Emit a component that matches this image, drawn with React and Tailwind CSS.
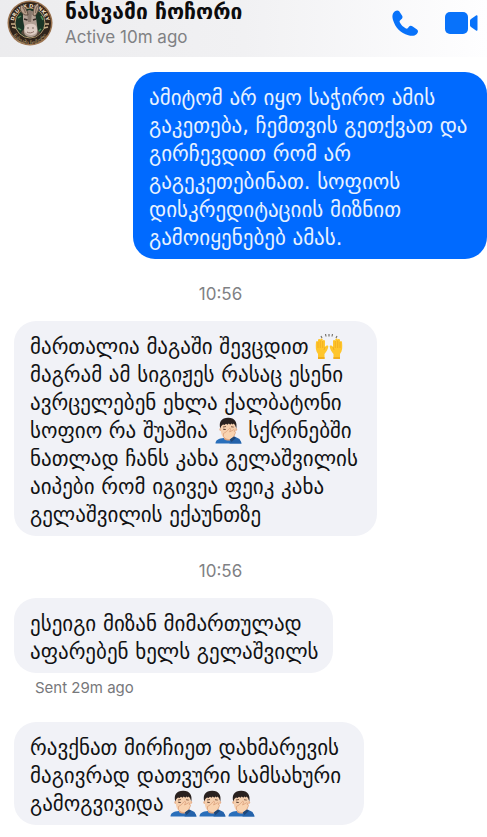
const text = "font-['DejaVu_Sans',sans-serif]";
const latin = "font-[Inter,'DejaVu_Sans',sans-serif]";

function Avatar() {
  return (
    <svg viewBox="0 0 46 46" className="size-[46px] shrink-0" role="img" aria-label="Profile picture">
      <defs>
        <path id="arc-top" d="M6.500 24a16.500 16.500 0 0 1 33 0" />
        <path id="arc-bottom" d="M3.500 25a19.500 19.500 0 0 0 39 0" />
      </defs>
      <circle cx="23" cy="23" r="22.500" fill="#9a7350" />
      <circle cx="23" cy="23" r="21" fill="#30241a" />
      <circle cx="23" cy="23" r="15" fill="#1b3526" stroke="#b29770" strokeWidth="1" />
      <path d="M11 18l3-2M11 28l3 2M34 16l2 4M34 29l-3 3" stroke="#4f8a58" strokeWidth="1.500" />
      <path d="M14 33c2-4 4-5 6-5l8 1c3 1 5 3 5 5-5 4-13 5-19-1z" fill="#5c4a3e" />
      <path d="M16 13c3-3 10-3 12 0l1.500 8 1 8c1 6-3 8-7 8-5 0-8-4-6-9l-1.500-8z" fill="#b3a195" />
      <path d="M20 11c2-2 5-1 5 1l-1 10h-3z" fill="#8a796e" />
      <path d="M18 26c3-3 9-3 11 0 3 5 0 9-5 9s-8-4-6-9z" fill="#ddccc3" />
      <path d="M17 19l3.500 1M26 20l3-1" stroke="#382c27" strokeWidth="1.500" fill="none" />
      <path d="M20 32c2 1.500 5 1 7-.5" stroke="#8b6f66" strokeWidth="1" fill="none" />
      <circle cx="21" cy="28" r=".8" fill="#6d5d54" />
      <circle cx="26" cy="28" r=".8" fill="#6d5d54" />
      <path d="M4 24h4M38 24h4M5 27l4 1M37 28l4-1" stroke="#cbb38c" strokeWidth="1.500" />
      <text fill="#ecdcc0" fontSize="5" fontWeight="700" className={text}>
        <textPath href="#arc-top" startOffset="50%" textAnchor="middle">DRUNK DONKEY</textPath>
      </text>
      <text fill="#c7ad7e" fontSize="5" className={text}>
        <textPath href="#arc-bottom" startOffset="50%" textAnchor="middle">ნასვამი ჩოჩორი</textPath>
      </text>
      <path d="M18 15c-4-2-6-6-4-10 4 1 6 5 7 10zM26 15c0-5 1-10 5-12 2 4 0 10-3 13z" fill="#b8a08c" stroke="#4c3b30" strokeWidth=".8" />
      <path d="M15.500 7c2 2 2 3 3 6M30.500 6c-2 3-2 5-2 7" stroke="#80675a" strokeWidth="1.200" fill="none" />
    </svg>
  );
}

function Facepalm() {
  return (
    <svg viewBox="0 0 27 27" className="inline-block size-[27px] align-[-6px]" role="img" aria-label="Facepalm">
      <path d="M.5 26.500c0-3.500 3-5 8.500-5.500h9c5 0 8 2 8.500 5.500z" fill="#2a6fbb" />
      <path d="M9 18h9v4c-2 2-7 2-9 0z" fill="#dba17d" />
      <circle cx="5.700" cy="12.500" r="1.400" fill="#e8b490" />
      <circle cx="20.800" cy="12.500" r="1.400" fill="#e8b490" />
      <path d="M5.800 9C6 4.500 9 3 13.300 3s7.200 1.500 7.400 6l-.2 6c-.4 4.500-3.500 7.500-7.200 7.500S6.500 19.500 6 15z" fill="#f5cfae" />
      <path d="M5.300 11.500C3.500 5 6.500.7 13 .7c6.500-.2 9.500 4 8.300 10.800l-1.300-3.500-1.500-1.500-.7 1-1.500-1-1 1.200-1.600-1.200-1.200 1.300-1.500-1L9.500 8l-1.500-.5-1.700 1.500z" fill="#29211f" />
      <path d="M8 10l3-.5M16 9.700l2.700.4" stroke="#76513b" strokeWidth=".9" fill="none" />
      <path d="M8.200 12.200l2.500.3" stroke="#50372b" strokeWidth="1" />
      <path d="M8.500 16.500c2-1 4-2.500 5.500-4.700.9-1.200 2-.3 1.300 1.200l-.7 2 4-2.200c1-.3 1.300.7.5 1.500 1.300.1 1.600 1 1 2.200l-1.600 3.500-3 2.500c-3 .5-6-.8-7-3z" fill="#f9d3b0" stroke="#d99c77" strokeWidth=".7" />
      <path d="M14.500 26.500l1-4.500 4-2.500 5 2.500 2 4.500z" fill="#2462aa" />
      <path d="M14.800 22.500l4.200-3 1.800 1.500-4.300 4z" fill="#204878" />
    </svg>
  );
}

function RaisedHands() {
  return (
    <svg viewBox="0 0 28 27" className="inline-block h-[27px] w-[28px] align-[-6px]" role="img" aria-label="Raised hands">
      <path d="M6 3l1 2M10.500 1l.5 2.500M14 1v2.500M17.500 1L17 3.500M22 3l-1 2" stroke="#77736e" strokeWidth="1.200" fill="none" />
      <g id="hand">
        <path d="M3 26v-5C.5 18 .5 14 1 9c.2-1.500 2-1.500 2 0V7c.2-1.500 2.200-1.500 2.300 0v-.5c.2-1.500 2.300-1.500 2.400 0V8c.3-1.300 2.200-1.200 2.300.2V14c1-2 3.500-2 3.300-.2-.3 2.200-2 5.200-3.800 7.200v5z" fill="#ffc62b" />
        <path d="M3 9v6M5.300 7.500V15M7.700 8v7M10 14l-1 3" stroke="#eda51d" strokeWidth=".7" fill="none" />
        <path d="M3 24h6.500v2H3z" fill="#f1ad1d" />
      </g>
      <use href="#hand" transform="matrix(-1 0 0 1 28 0)" />
    </svg>
  );
}

function Message({ lines, outgoing = false, width }) {
  return (
    <div
      className={`${width} ${text} max-w-full rounded-[22px] px-4 pt-3 pb-[7px] text-[21px] leading-7 whitespace-nowrap ${
        outgoing ? "self-end bg-[#006aff] text-[#e8f2ff]" : "ml-[14px] self-start bg-[#f1f2f7] text-[#111214]"
      }`}
    >
      {lines.map((line, i) => (
        <p key={i} className="h-7">{line}</p>
      ))}
    </div>
  );
}

function Time({ children }) {
  return <time className={`${latin} mr-[46px] self-center pt-[25px] pb-[17px] text-[17px] leading-5 text-[#808184]`}>{children}</time>;
}

export default function App() {
  return (
    <div className="min-h-screen overflow-hidden bg-white">
      <header className="flex h-[57px] items-start bg-linear-to-r from-[#ececee] via-[#f1f1f3] to-[#fefeff] pr-[9px] pl-[7px]">
        <Avatar />
        <div className="ml-3 grow whitespace-nowrap">
          <h1 className={`${text} text-[21px] leading-[25px] font-bold text-[#0c0c0e]`}>ნასვამი ჩოჩორი</h1>
          <p className={`${latin} text-[17px] leading-6 text-[#808184]`}>Active 10m ago</p>
        </div>
        <div className="flex items-center gap-6 pt-2">
          <button type="button" aria-label="Call">
            <svg viewBox="0 0 30 30" className="size-[30px]" fill="#0872fa">
              <path d="M3 5.500C4.500 3 7 1.500 9 3l3 4.500c1 1.500.5 3-1 4l-1 1c-.7.700-.5 1.300 0 2.200 1.500 2.500 3 4 5.500 5.500 1 .600 1.600.600 2.200 0l1-1.200c1-1.300 2.500-1.500 4-.5l4.300 3c1.500 1.200 1.200 3-.2 4.400-2 2-5 2.500-8.500 1.300C10.500 25 5.500 20 3 12c-.8-2.700-.8-4.700 0-6.500z" />
            </svg>
          </button>
          <button type="button" aria-label="Video call">
            <svg viewBox="0 0 34 24" className="h-6 w-[34px]" fill="#0872fa">
              <rect x="1" y="1" width="23" height="22" rx="5" />
              <path d="M26 10c0-1 .3-1.500 1-2l5-3.500c1-.6 1.500-.3 1.500.8v13.400c0 1.100-.5 1.400-1.500.8L27 16c-.7-.5-1-1-1-2z" />
            </svg>
          </button>
        </div>
      </header>
      <main className="flex flex-col pt-[15px]">
        <Message
          outgoing
          width="w-[354px]"
          lines={["ამიტომ არ იყო საჭირო ამის", "გაკეთება, ჩემთვის გეთქვათ და", "გირჩევდით რომ არ", "გაგეკეთებინათ. სოფიოს", "დისკრედიტაციის მიზნით", "გამოიყენებებ ამას."]}
        />
        <Time>10:56</Time>
        <Message
          width="w-[363px]"
          lines={[
            <>მართალია მაგაში შევცდით <RaisedHands /></>,
            "მაგრამ ამ სიგიჟეს რასაც ესენი",
            "ავრცელებენ ეხლა ქალბატონი",
            <>სოფიო რა შუაშია <Facepalm /> სქრინებში</>,
            "ნათლად ჩანს კახა გელაშვილის",
            "აიპები რომ იგივეა ფეიკ კახა",
            "გელაშვილის ექაუნთზე",
          ]}
        />
        <Time>10:56</Time>
        <Message width="w-[319px]" lines={["ესეიგი მიზან მიმართულად", "აფარებენ ხელს გელაშვილს"]} />
        <p className={`${latin} ml-[35px] pt-[5px] pb-6 text-[15px] leading-5 text-[#77787b]`}>Sent 29m ago</p>
        <Message
          width="w-[350px]"
          lines={[
            "რავქნათ მირჩიეთ დახმარევის",
            "მაგივრად დათვური სამსახური",
            <>გამოგვივიდა <span className="inline-flex gap-0.5 align-[-6px]"><Facepalm /><Facepalm /><Facepalm /></span></>,
          ]}
        />
      </main>
    </div>
  );
}
